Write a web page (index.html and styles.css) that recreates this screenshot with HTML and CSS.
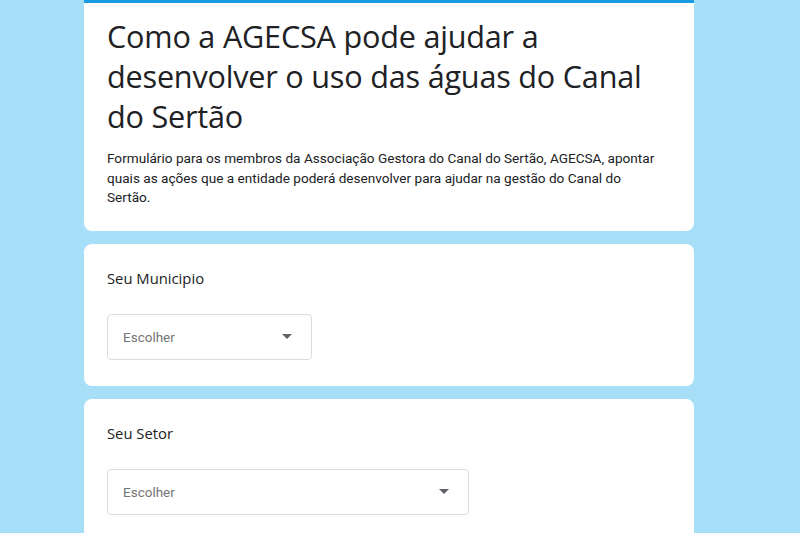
FILE: index.html
```html
<!DOCTYPE html>
<html lang="pt-BR">
<head>
<meta charset="utf-8">
<title>Como a AGECSA pode ajudar</title>
<link rel="stylesheet" href="styles.css">
</head>
<body>
<main class="form">
  <section class="card card-header">
    <h1 class="title">Como a AGECSA pode ajudar a desenvolver o uso das águas do Canal do Sertão</h1>
    <p class="desc">Formulário para os membros da Associação Gestora do Canal do Sertão, AGECSA, apontar quais as ações que a entidade poderá desenvolver para ajudar na gestão do Canal do Sertão.</p>
  </section>
  <section class="card question">
    <div class="label">Seu Municipio</div>
    <div class="select select-short">
      <span class="placeholder">Escolher</span>
      <span class="arrow"></span>
    </div>
  </section>
  <section class="card question">
    <div class="label">Seu Setor</div>
    <div class="select select-long">
      <span class="placeholder">Escolher</span>
      <span class="arrow"></span>
    </div>
  </section>
</main>
</body>
</html>
```
FILE: styles.css
```css
html, body {
  margin: 0;
  padding: 0;
  background: #a7dff9;
  height: 100%;
  overflow: hidden;
}
.form {
  width: 610px;
  margin-left: 84px;
  display: flex;
  flex-direction: column;
  gap: 13px;
}
.card {
  background: #fff;
  border-radius: 8px;
  padding: 0 23px;
}
.card-header {
  border-top: 3px solid #1a9be2;
  border-radius: 0 0 8px 8px;
  padding-top: 13px;
  padding-bottom: 23px;
}
.title {
  margin: 0;
  font-family: "Open Sans", sans-serif;
  font-weight: 400;
  font-size: 30.6px;
  line-height: 40px;
  color: #202124;
  letter-spacing: -0.2px;
}
.desc {
  margin: 13px 0 0;
  max-width: 559px;
  font-family: Roboto, sans-serif;
  font-size: 13.6px;
  line-height: 19.5px;
  color: #202124;
}
.question {
  padding-top: 24px;
  padding-bottom: 26px;
}
.label {
  font-family: "Open Sans", sans-serif;
  font-size: 14.8px;
  line-height: 20px;
  color: #202124;
  margin-bottom: 26px;
}
.select {
  box-sizing: border-box;
  height: 46px;
  border: 1px solid #dadce0;
  border-radius: 4px;
  display: flex;
  align-items: center;
  justify-content: space-between;
  padding: 0 19px 0 15px;
}
.select-short { width: 205px; }
.select-long { width: 362px; }
.placeholder {
  font-family: Roboto, sans-serif;
  font-size: 13.5px;
  color: #757575;
}
.arrow {
  width: 0;
  height: 0;
  border-left: 5px solid transparent;
  border-right: 5px solid transparent;
  border-top: 5px solid #5f6368;
}
```
